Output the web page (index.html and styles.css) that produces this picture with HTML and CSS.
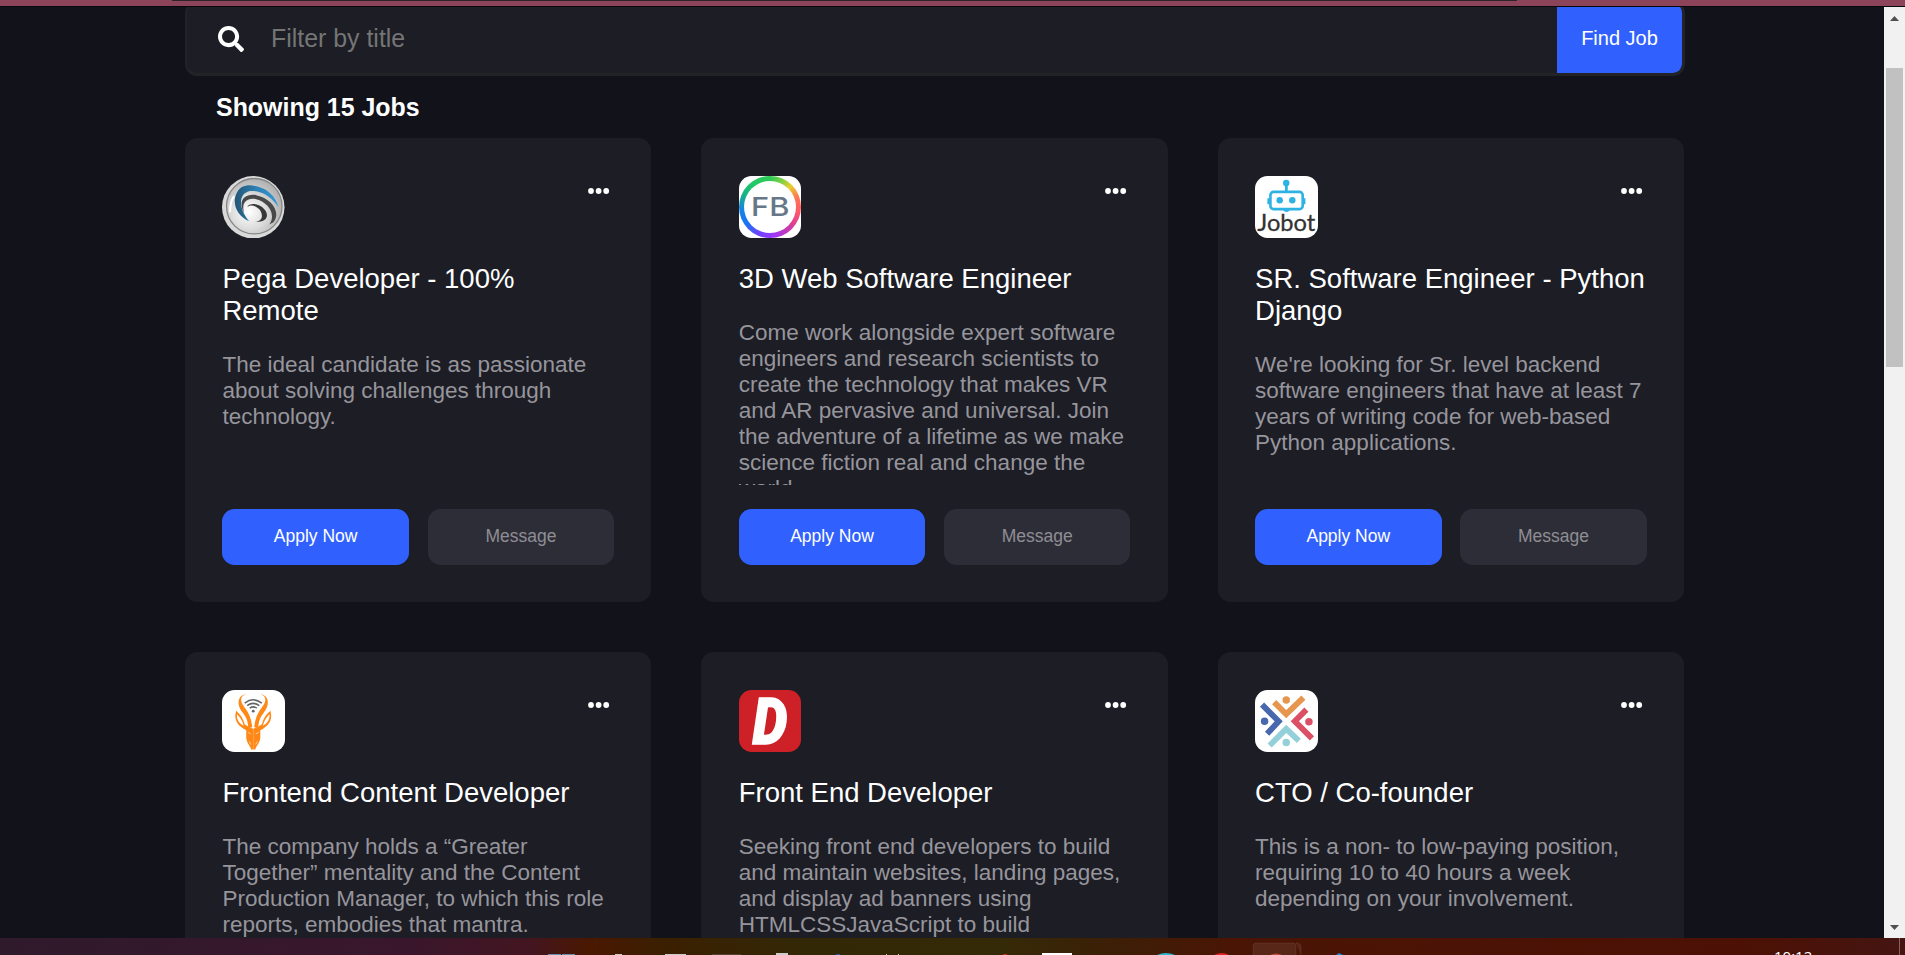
FILE: index.html
```html
<!DOCTYPE html>
<html lang="en">
<head>
<meta charset="utf-8">
<title>Jobs</title>
<link rel="stylesheet" href="styles.css">
</head>
<body>
<div class="frame"><div class="frame-tab"></div></div>
<div class="viewport">
  <main class="page">
    <form class="search">
      <svg class="search-icon" viewBox="0 0 512 512"><path fill="#fff" d="M505 442.700 405.300 343c-4.500-4.500-10.600-7-17-7H372c27.600-35.300 44-79.700 44-128C416 93.100 322.900 0 208 0S0 93.100 0 208s93.100 208 208 208c48.300 0 92.700-16.400 128-44v16.300c0 6.400 2.500 12.500 7 17l99.700 99.700c9.400 9.400 24.600 9.400 33.900 0l28.300-28.300c9.400-9.400 9.400-24.600.1-34zM208 336c-70.700 0-128-57.200-128-128 0-70.700 57.200-128 128-128 70.700 0 128 57.200 128 128 0 70.700-57.200 128-128 128z"/></svg>
      <input class="search-input" type="text" placeholder="Filter by title">
      <button class="search-button" type="button">Find Job</button>
    </form>
    <h1 class="count">Showing 15 Jobs</h1>
    <section class="jobs">
      <article class="card">
        <header class="card-head">
          <svg class="logo" viewBox="0 0 62 62">
            <defs>
              <radialGradient id="silver" cx=".4" cy=".6" r=".6"><stop offset="0" stop-color="#fff"/><stop offset=".5" stop-color="#dedede"/><stop offset="1" stop-color="#b4b4b4"/></radialGradient>
              <linearGradient id="blue"><stop offset="0" stop-color="#235675"/><stop offset=".5" stop-color="#2d81b5"/><stop offset="1" stop-color="#3998d3"/></linearGradient>
            </defs>
            <circle cx="31" cy="31" r="31" fill="#d9d9d9"/>
            <circle cx="32" cy="30" r="27.500" fill="url(#silver)" stroke="#858585" stroke-width="1.300"/>
            <path d="M8 36C8 29 9 24 12 20" fill="none" stroke="#fff" stroke-width="2"/>
            <path fill="url(#blue)" d="M27 45C15 40 9 27 15 16 20 7 31 8 42 13 49 17 54 23 56 31 49 20 38 14 28 15 16 17 16 32 27 45z"/>
            <path fill="#494949" d="M22 37C15 24 23 17 34 19 49 22 59 36 51 46L47 48C54 38 46 26 34 23 24 21 19 27 22 37z"/>
            <path fill="#383838" d="M25 31C27 26 37 27 42 33 48 40 43 47 33 45 41 45 41 38 37 33 33 29 28 28 25 31z"/>
          </svg>
          <svg class="dots" viewBox="0 0 22 6"><circle cx="3" cy="3" r="2.900"/><circle cx="10.600" cy="3" r="2.900"/><circle cx="18.200" cy="3" r="2.900"/></svg>
        </header>
        <h2 class="title">Pega Developer - 100% Remote</h2>
        <p class="desc">The ideal candidate is as passionate about solving challenges through technology.</p>
        <div class="actions"><button class="btn btn-apply">Apply Now</button><button class="btn btn-message">Message</button></div>
      </article>
      <article class="card">
        <header class="card-head">
          <div class="logo logo-white"><div class="fb-ring"><div class="fb-core"><svg class="fb-text" viewBox="0 0 52 52"><text class="fb-name" x="7" y="35" textLength="38" lengthAdjust="spacingAndGlyphs">FB</text></svg></div></div></div>
          <svg class="dots" viewBox="0 0 22 6"><circle cx="3" cy="3" r="2.900"/><circle cx="10.600" cy="3" r="2.900"/><circle cx="18.200" cy="3" r="2.900"/></svg>
        </header>
        <h2 class="title">3D Web Software Engineer</h2>
        <p class="desc">Come work alongside expert software engineers and research scientists to create the technology that makes VR and AR pervasive and universal. Join the adventure of a lifetime as we make science fiction real and change the world.</p>
        <div class="actions"><button class="btn btn-apply">Apply Now</button><button class="btn btn-message">Message</button></div>
      </article>
      <article class="card">
        <header class="card-head">
          <svg class="logo logo-white" viewBox="0 0 62 62">
            <g fill="#2db2e3"><circle cx="31" cy="7" r="3.200"/><path d="M29.700 8h2.800v8h-2.800zM12.300 22h3v6h-3zM47 22h3v6h-3zM28 33h6.500c0 3.500-6.500 3.500-6.500 0z"/><circle cx="24.500" cy="24" r="3.200"/><circle cx="37" cy="24" r="3.200"/></g>
            <rect x="15.300" y="15.800" width="32" height="17" rx="3" fill="none" stroke="#2db2e3" stroke-width="2.600"/>
            <text class="jobot-name" x="2.300" y="54.800" textLength="57.500" lengthAdjust="spacingAndGlyphs">Jobot</text>
          </svg>
          <svg class="dots" viewBox="0 0 22 6"><circle cx="3" cy="3" r="2.900"/><circle cx="10.600" cy="3" r="2.900"/><circle cx="18.200" cy="3" r="2.900"/></svg>
        </header>
        <h2 class="title">SR. Software Engineer - Python Django</h2>
        <p class="desc">We're looking for Sr. level backend software engineers that have at least 7 years of writing code for web-based Python applications.</p>
        <div class="actions"><button class="btn btn-apply">Apply Now</button><button class="btn btn-message">Message</button></div>
      </article>
      <article class="card">
        <header class="card-head">
          <svg class="logo logo-white" viewBox="0 0 62 62">
            <g fill="none" stroke="#666" stroke-width="1.500"><path d="M22.500 13Q31 6.500 39.500 13M25 15.500Q31 11 37 15.500M27.500 18Q31 15.500 34.500 18"/></g><circle cx="31" cy="21" r="1.400" fill="#666"/>
            <g id="horn"><path fill="#ff8817" d="M24 4C14 6 15 16 21 23 25 28 26 33 26 38L30 37C29 27 26 22 23 18 17 11 18 6 24 4z"/><path fill="#ff8817" fill-rule="evenodd" d="M14 20.500C18 24 21 28 22.500 34L27 37 31 38.500V59H29C28 55 24.500 53 24 47V40C17 36 11 31 14 20.500zM15 24C14 30 18 33.500 21.500 35.500 20.500 31 18 27 15 24z"/><path d="M25.500 42l3 1.500M27 51l1.500 3" stroke="#ffd9b0" stroke-width=".8"/></g>
            <use href="#horn" transform="matrix(-1 0 0 1 62 0)"/>
          </svg>
          <svg class="dots" viewBox="0 0 22 6"><circle cx="3" cy="3" r="2.900"/><circle cx="10.600" cy="3" r="2.900"/><circle cx="18.200" cy="3" r="2.900"/></svg>
        </header>
        <h2 class="title">Frontend Content Developer</h2>
        <p class="desc">The company holds a “Greater Together” mentality and the Content Production Manager, to which this role reports, embodies that mantra.</p>
        <div class="actions"><button class="btn btn-apply">Apply Now</button><button class="btn btn-message">Message</button></div>
      </article>
      <article class="card">
        <header class="card-head">
          <svg class="logo logo-red" viewBox="0 0 62 62">
            <text class="d-name" transform="translate(13.500 54) scale(.86 1)">D</text>
          </svg>
          <svg class="dots" viewBox="0 0 22 6"><circle cx="3" cy="3" r="2.900"/><circle cx="10.600" cy="3" r="2.900"/><circle cx="18.200" cy="3" r="2.900"/></svg>
        </header>
        <h2 class="title">Front End Developer</h2>
        <p class="desc">Seeking front end developers to build and maintain websites, landing pages, and display ad banners using HTMLCSSJavaScript to build</p>
        <div class="actions"><button class="btn btn-apply">Apply Now</button><button class="btn btn-message">Message</button></div>
      </article>
      <article class="card">
        <header class="card-head">
          <svg class="logo logo-white" viewBox="0 0 62 62">
            <g fill="none" stroke-width="5.800"><path stroke="#e6964f" d="M19 12 31 24 48 7.500"/><path stroke="#4967ad" d="M7 14.500 23.500 31 12 43.500"/><path stroke="#dc5065" d="M51 19.500 39.500 31 56.500 48"/><path stroke="#94d0d9" d="M14.500 55 31 38.500 43.500 50.500"/></g>
            <circle cx="31" cy="10" r="3.700" fill="#e6964f"/><circle cx="9.500" cy="31" r="3.700" fill="#4967ad"/><circle cx="53.500" cy="31.500" r="3.700" fill="#dc5065"/><circle cx="31" cy="52" r="3.700" fill="#94d0d9"/>
          </svg>
          <svg class="dots" viewBox="0 0 22 6"><circle cx="3" cy="3" r="2.900"/><circle cx="10.600" cy="3" r="2.900"/><circle cx="18.200" cy="3" r="2.900"/></svg>
        </header>
        <h2 class="title">CTO / Co-founder</h2>
        <p class="desc">This is a non- to low-paying position, requiring 10 to 40 hours a week depending on your involvement.</p>
        <div class="actions"><button class="btn btn-apply">Apply Now</button><button class="btn btn-message">Message</button></div>
      </article>
    </section>
  </main>
  <div class="scrollbar">
    <svg class="arrow" viewBox="0 0 21 21"><path fill="#505050" d="M6 14h9l-4.500-5z"/></svg>
    <div class="thumb"></div>
    <svg class="arrow" viewBox="0 0 21 21"><path fill="#505050" d="M6 8h9l-4.500 5z"/></svg>
  </div>
</div>
<footer class="taskbar">
  <svg class="taskbar-icons" viewBox="0 0 1905 17">
    <path fill="#6293a8" d="M548 16h13v1h-13zM562 16h13v1h-13z"/>
    <path fill="#ccc" d="M615 16h7v1h-7zM665 16h21v1h-21zM776 15h12v2h-12zM886 16h1v1h-1zM898 16h1v1h-1z"/>
    <path fill="#544134" d="M712 16h29v1h-29z"/>
    <path fill="#1f5fa0" d="M836 16h4v1h-4z"/>
    <path fill="#bd3218" d="M1003 16h4v1h-4z"/>
    <path fill="#fff" d="M1042 15h30v2h-30z"/>
    <path fill="#2eb6cc" d="M1157 17q9-4 18 0z"/><path fill="#e02424" d="M1214 17q8-4 15 0z"/>
    <path fill="#fff" fill-opacity=".08" stroke="#fff" stroke-opacity=".07" d="M1253 18V8q0-3 3-3h37q3 0 3 3v10M1296 5q5 0 5 4v9"/>
    <path fill="#c34c36" d="M1270 17q6-3 12 0z"/>
    <path fill="#1e87d0" d="M1336 17l3-2 4 2z"/>
    <path fill="#8b625b" d="M1899 0h1v17h-1z"/>
    <text class="clock" x="1774" y="24">10:12</text>
  </svg>
</footer>
</body>
</html>
```
FILE: styles.css
```css
* { box-sizing: border-box; }

body {
  margin: 0;
  height: 955px;
  overflow: hidden;
  display: flex;
  flex-direction: column;
  background: #11121a;
  font-family: "Liberation Sans", Arial, sans-serif;
}

.frame {
  flex: none;
  height: 7px;
  padding-left: 172px;
  background: #8c445b;
  border-bottom: 1px solid #08070a;
}

.frame-tab {
  width: 1345px;
  height: 1px;
  background: #2b2527;
}

.viewport {
  flex: none;
  height: 931px;
  display: flex;
  overflow: hidden;
}

.page {
  flex: 1;
  height: 931px;
  padding: 0 200px 0 185px;
  overflow: hidden;
}

.search {
  display: flex;
  align-items: center;
  height: 75px;
  width: 1500px;
  margin-top: -6px;
  padding-left: 31px;
  border: 2px solid #212327;
  border-right-width: 3px;
  border-bottom-width: 3px;
  border-radius: 12px;
  background: #1c1d25;
  overflow: hidden;
}

.search-icon {
  flex: none;
  width: 26px;
  height: 26px;
  margin-top: 1px;
}

.search-input {
  flex: 1;
  margin: 1px 0 0 27px;
  padding: 0;
  border: 0;
  background: none;
  outline: none;
  color: #fff;
  font: 24.900px "Liberation Sans", Arial, sans-serif;
}

.search-input::placeholder { color: #757575; }

.search-button {
  align-self: stretch;
  width: 125px;
  padding: 0;
  border: 0;
  border-radius: 0 4px 8px 0;
  background: #3061ff;
  color: #fff;
  font: 20px "Liberation Sans", Arial, sans-serif;
}

.count {
  margin: 17px 0 16px 31px;
  font-size: 24.950px;
  line-height: 29px;
  color: #fff;
}

.jobs {
  display: grid;
  grid-template-columns: repeat(3, 466.330px);
  grid-auto-rows: 464px;
  gap: 50px;
}

.card {
  display: flex;
  flex-direction: column;
  padding: 37.500px 37.200px 37.500px 37.400px;
  border-radius: 12.500px;
  background: #1c1d25;
}

.card-head {
  display: flex;
  justify-content: space-between;
  align-items: flex-start;
}

.logo {
  width: 62.500px;
  height: 62.500px;
  border-radius: 12.500px;
}

.logo-white { background: #fff; }
.logo-red { background: #cd2027; }

.fb-ring {
  height: 100%;
  padding: 5px;
  border-radius: 50%;
  background: conic-gradient(#2ecb55, #7ed044 25deg, #e9cf2c 45deg, #ff7752 70deg, #ff5668 100deg, #d139a5 135deg, #9838ff 175deg, #6c46ff 205deg, #1774f5 235deg, #1684e5 265deg, #16b285 295deg, #21ca65 325deg, #2ecb55);
}

.fb-core {
  height: 100%;
  border-radius: 50%;
  background: #fff;
}

.fb-text {
  display: block;
  width: 100%;
  height: 100%;
}

.fb-name {
  fill: #667788;
  font: 500 25px Inter, sans-serif;
}

.jobot-name {
  fill: #333;
  stroke: #333;
  stroke-width: .3px;
  font: 23px Lato, sans-serif;
}

.d-name {
  fill: #fff;
  stroke: #fff;
  stroke-width: 1.500px;
  font: italic 900 64px Roboto, sans-serif;
}

.dots {
  width: 22px;
  height: 6px;
  margin: 12.500px 3.700px 0 0;
  fill: #fff;
}

.title {
  margin: 24.500px 0 25px;
  color: #fff;
  font-size: 27.500px;
  font-weight: 400;
  line-height: 32px;
}

.desc {
  flex: 1;
  min-height: 0;
  margin: 0 0 24px;
  overflow: hidden;
  color: #97959c;
  font-size: 22.500px;
  line-height: 26px;
}

.actions {
  flex: none;
  display: grid;
  grid-template-columns: 1fr 1fr;
  gap: 18.750px;
}

.btn {
  height: 56px;
  padding: 0 0 1px;
  border: 0;
  border-radius: 12.500px;
  font: 17.500px "Liberation Sans", Arial, sans-serif;
}

.btn-apply {
  background: #3061ff;
  color: #fff;
}

.btn-message {
  background: #2d2d37;
  color: #8f8d94;
}

.scrollbar {
  width: 21px;
  display: flex;
  flex-direction: column;
  align-items: center;
  background: #f1f1f1;
}

.arrow {
  width: 21px;
  height: 21px;
}

.thumb {
  width: 17px;
  height: 299px;
  margin: 40px 0 auto;
  background: #c1c1c1;
}

.taskbar {
  flex: none;
  height: 17px;
  background: linear-gradient(90deg, #2f1a2c 0, #3a162c 410px, #431520 530px, #4a1800 590px, #3b1f00 660px, #332806 800px, #352a08 1000px, #3b2006 1100px, #4a1505 1230px, #4c1104 1740px, #451512 1905px);
}

.taskbar-icons {
  display: block;
  width: 1905px;
  height: 17px;
}

.clock {
  fill: #fff;
  font: 15px "Open Sans", sans-serif;
}
```
